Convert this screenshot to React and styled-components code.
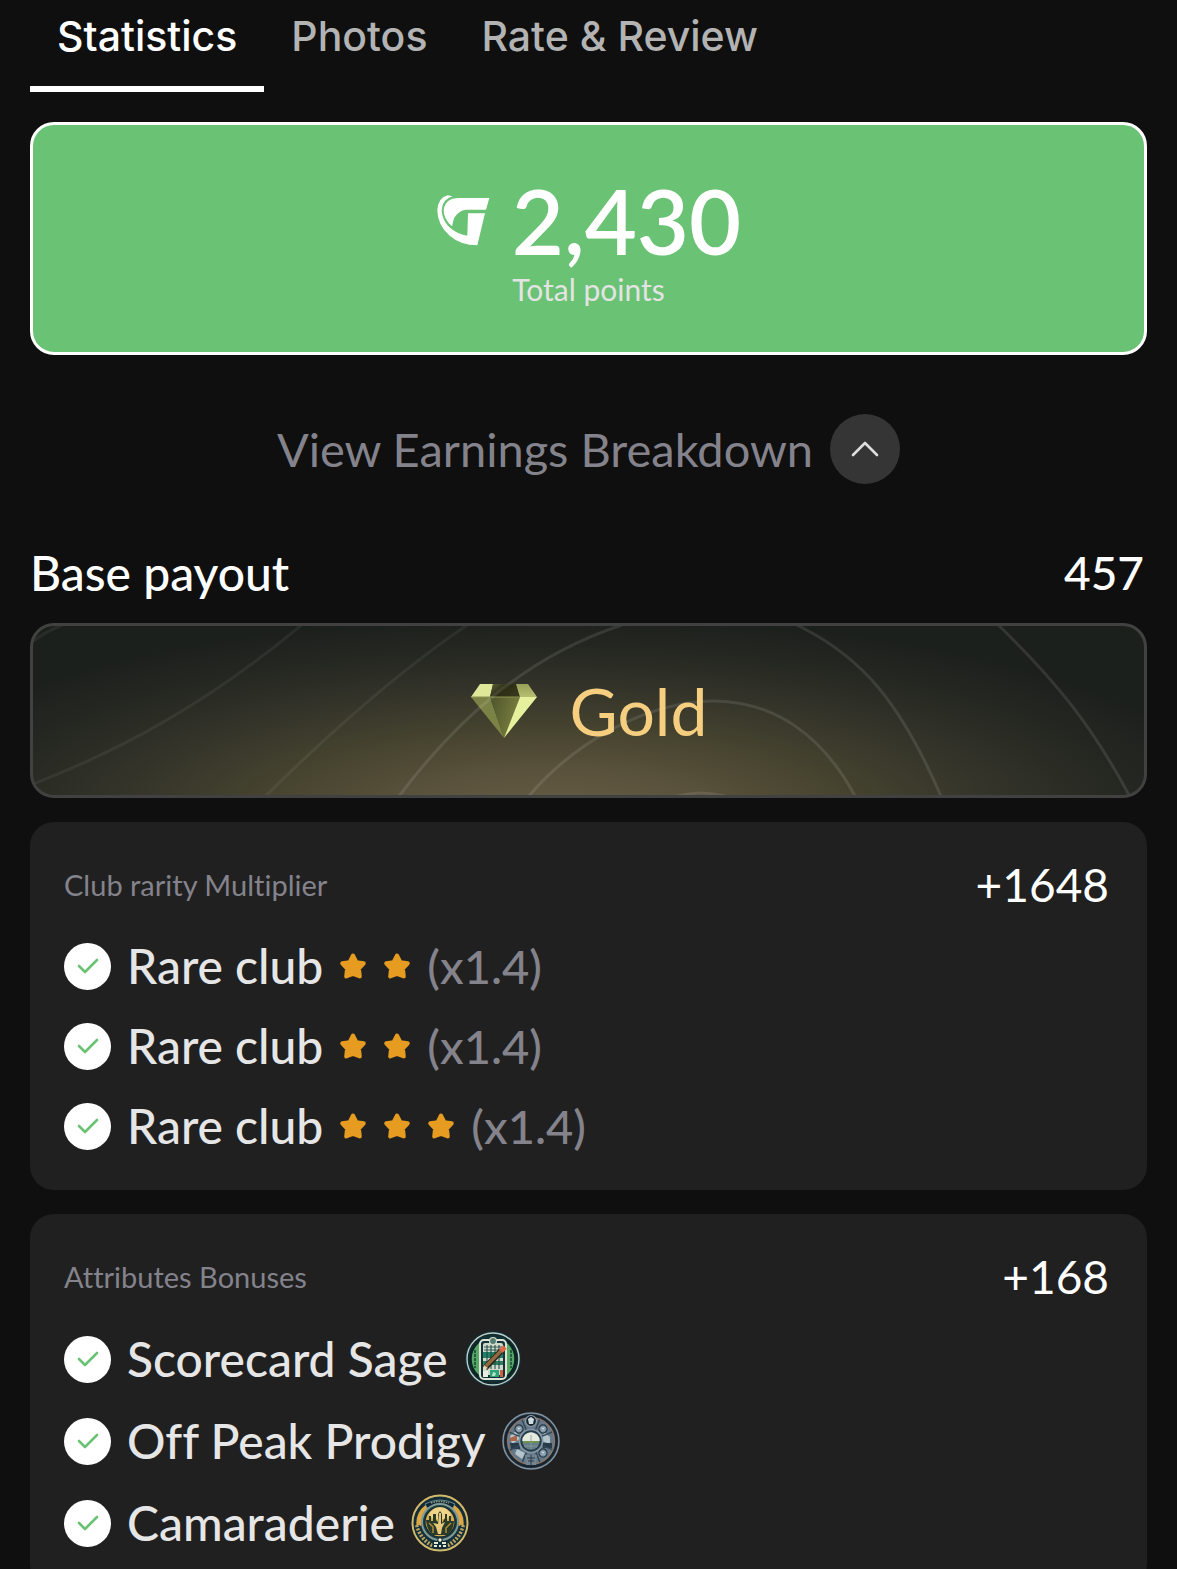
import React, { useState } from "react";
import styled, { createGlobalStyle } from "styled-components";

const GlobalStyle = createGlobalStyle`
  * {
    box-sizing: border-box;
  }

  body {
    margin: 0;
    background-color: #0f0f0f;
  }

  button {
    border: none;
    background: none;
    font: inherit;
    cursor: pointer;
  }
`;

const Page = styled.main`
  height: 100vh;
  overflow-y: auto;
  scrollbar-width: none;
  padding: 0 30px 30px;
  background-color: #0f0f0f;
  color: #ffffff;
  font-family: Lato, sans-serif;
  font-size: 48px;
  font-variant-ligatures: none;
  line-height: 58px;
`;

const TabList = styled.div`
  display: flex;
  height: 92px;
  margin-bottom: 30px;
`;

const Tab = styled.button`
  padding: 0 27px 14px;
  border-bottom: 6px solid ${({ $active }) => ($active ? "#ffffff" : "transparent")};
  color: ${({ $active }) => ($active ? "#ffffff" : "#b3b3b3")};
  font-family: Inter, sans-serif;
  font-size: 41px;
  font-weight: 500;
  white-space: nowrap;
`;

const PointsCard = styled.section`
  display: flex;
  flex-direction: column;
  align-items: center;
  padding: 46px 0 43px;
  border: 3px solid #ffffff;
  border-radius: 24px;
  background-color: #6ac274;
`;

const Points = styled.div`
  display: flex;
  align-items: center;
  gap: 22px;
  font-size: 90px;
  font-weight: 600;
  line-height: 98px;
`;

const PointsLabel = styled.div`
  color: #e4e4e4;
  font-size: 30px;
  line-height: 40px;
`;

const BreakdownToggle = styled.button`
  display: flex;
  align-items: center;
  gap: 17px;
  margin: 59px auto 0;
  padding: 0;
  color: #84838c;
  font-size: 47px;
`;

const ToggleCircle = styled.span`
  display: flex;
  align-items: center;
  justify-content: center;
  width: 70px;
  height: 70px;
  border-radius: 50%;
  background-color: #353535;
`;

const Payout = styled.div`
  display: flex;
  justify-content: space-between;
  margin: 60px 3px 21px 0;
  font-weight: 500;
`;

const Amount = styled.span`
  font-size: 46px;
`;

const TierCard = styled.section`
  position: relative;
  display: flex;
  align-items: center;
  justify-content: center;
  gap: 32px;
  height: 175px;
  overflow: hidden;
  border: 3px solid #414141;
  border-radius: 24px;
  background: radial-gradient(
    ellipse 62% 118% at 47% 112%,
    #665d45 0%,
    #5a523c 22%,
    #47442f 42%,
    #35352a 62%,
    #262822 82%,
    #1c201c 100%
  );
`;

const Rings = styled.svg`
  position: absolute;
  inset: 0;
  width: 100%;
  height: 100%;
  fill: none;
  stroke: #ffffff;
  stroke-width: 3;
`;

const TierName = styled.span`
  position: relative;
  color: #f5ce80;
  font-size: 66px;
  line-height: 76px;
`;

const BonusCard = styled.section`
  margin-top: 24px;
  padding: 34px 38px 24px 34px;
  border-radius: 24px;
  background-color: #202020;
`;

const BonusHeader = styled.header`
  display: flex;
  align-items: center;
  justify-content: space-between;
  margin-bottom: 12px;
`;

const BonusTitle = styled.h2`
  margin: 0;
  color: #84838c;
  font-size: 29px;
  font-weight: 400;
`;

const BonusList = styled.ul`
  margin: 0;
  padding: 0;
  list-style: none;
`;

const BonusItem = styled.li`
  display: flex;
  align-items: center;
  gap: 16px;
  height: ${({ $tall }) => ($tall ? 82 : 80)}px;
  color: #e6e6e6;
  font-weight: 500;
`;

const CheckCircle = styled.span`
  display: flex;
  align-items: center;
  justify-content: center;
  width: 47px;
  height: 47px;
  border-radius: 50%;
  background-color: #ffffff;
`;

const Stars = styled.span`
  display: flex;
  gap: 16px;
`;

const Multiplier = styled.span`
  color: #84838c;
  font-size: 47px;
`;

const tabs = ["Statistics", "Photos", "Rate & Review"];
const clubs = [
  { id: 1, stars: 2 },
  { id: 2, stars: 2 },
  { id: 3, stars: 3 },
];

function Logo() {
  return (
    <svg width="54" height="54" viewBox="56 76 162 162" fill="#ffffff">
      <path d="M216 91 L206 126 L146 126 Q124 128 110 152 L104 176 Q78 153 79 126 Q84 92 124 91 Z" />
      <path d="M152 137 L203 137 L180 233 Q131 233 97 204 Q60 172 60 128 Q62 90 91 83 L106 86 Q73 95 73 129 Q75 160 100 182 Q124 202 150 204 Z" />
    </svg>
  );
}

function Diamond() {
  return (
    <svg width="68" height="56" viewBox="0 0 68 56">
      <defs>
        <linearGradient id="tableTop" x1="0" y1="0" x2="1" y2="0.5">
          <stop offset="0" stopColor="#5e6338" />
          <stop offset="0.5" stopColor="#2b2c14" />
          <stop offset="1" stopColor="#35381b" />
        </linearGradient>
        <linearGradient id="facetMid" x1="0" y1="0" x2="1" y2="0.4">
          <stop offset="0" stopColor="#4e532b" />
          <stop offset="1" stopColor="#79803f" />
        </linearGradient>
        <linearGradient id="facetRight" x1="0" y1="0" x2="0" y2="1">
          <stop offset="0" stopColor="#989e58" />
          <stop offset="1" stopColor="#b7bf71" />
        </linearGradient>
      </defs>
      <path d="M10 1 L23 1 L20 14 L1 14 Z" fill="#dfe799" />
      <path d="M23 1 L46 1 L50 14 L20 14 Z" fill="url(#tableTop)" />
      <path d="M46 1 L58 1 L67 14 L50 14 Z" fill="url(#facetRight)" />
      <path d="M1 14 L20 14 L34 55 Z" fill="#7b8246" />
      <path d="M20 14 L50 14 L34 55 Z" fill="url(#facetMid)" />
      <path d="M50 14 L67 14 L34 55 Z" fill="#e6f19d" />
      <path d="M1 14 H50" stroke="#8b9251" strokeWidth="1" />
    </svg>
  );
}

function TierRings() {
  return (
    <Rings viewBox="32 626 1113 169" preserveAspectRatio="none" aria-hidden="true">
      <g strokeOpacity="0.06">
        <path d="M32 641 Q46 631 61 625" />
        <path d="M32 784 C120 750 206 704 301 625" />
        <path d="M264 797 C330 732 400 670 467 625" />
      </g>
      <g strokeOpacity="0.1">
        <path d="M398 797 C460 715 530 655 622 625" />
        <path d="M528 797 C576 740 650 701 715 701 C775 702 823 735 856 797" />
        <path d="M797 625 C864 657 902 705 942 797" />
        <path d="M999 625 C1056 680 1094 727 1131 797" />
        <path d="M674 797 Q701 789 728 797" />
      </g>
    </Rings>
  );
}

function Check() {
  return (
    <CheckCircle>
      <svg width="24" height="18" viewBox="0 0 24 18" fill="none" stroke="#6ac274" strokeWidth="2.6" strokeLinecap="round" strokeLinejoin="round">
        <path d="M3 9 L9 15 L21 3" />
      </svg>
    </CheckCircle>
  );
}

function Star() {
  return (
    <svg width="28" height="30" viewBox="0 0 28 30">
      <path
        d="M14 4.5 L17.4 11.2 L24.8 12.3 L19.9 17.6 L20.8 25.5 L14 22.8 L7.2 25.5 L8.1 17.6 L3.2 12.3 L10.6 11.2 Z"
        fill="#e59c20"
        stroke="#e59c20"
        strokeWidth="4"
        strokeLinejoin="round"
      />
    </svg>
  );
}

function ScorecardBadge() {
  return (
    <svg width="58" height="58" viewBox="0 0 58 58">
      <circle cx="29" cy="29" r="28" fill="#142c35" />
      <circle cx="29" cy="29" r="26" fill="#152a2d" stroke="#b9d0c8" strokeWidth="1.4" />
      <circle cx="29" cy="29" r="22.5" fill="#57a766" stroke="#0b2527" strokeWidth="2.5" />
      <path d="M11 20 V38 M47 20 V38" stroke="#225c3c" strokeWidth="2" strokeDasharray="3 1" />
      <path d="M16 8 Q29 2 42 8 V12 H16 Z M16 47 Q29 58 42 47 Z" fill="#143234" />
      <rect x="16" y="10" width="26" height="39" rx="4" fill="#163337" stroke="#dfe5d9" strokeWidth="2" />
      <rect x="19" y="13" width="20" height="32" rx="2" fill="#d0d9cc" />
      <path d="M20 17 H38 M20 20 H38" stroke="#405f57" strokeWidth="1" />
      <rect x="19" y="22" width="20" height="6" fill="#258166" />
      <rect x="19" y="31" width="20" height="4" fill="#317e62" />
      <path d="M23 15 V39 M27 15 V39 M31 15 V39 M35 15 V39" stroke="#13463e" strokeWidth="1" />
      <rect x="19" y="41" width="5" height="6" fill="#ecede2" />
      <rect x="26" y="40" width="9" height="7" fill="#30a479" />
      <rect x="36" y="40" width="3" height="7" fill="#ca6044" />
      <path d="M29 42 L32 43 L31 46 H28 Z" fill="#b8e5c4" />
      <circle cx="29" cy="11" r="3.5" fill="#557e70" stroke="#d4ddd2" strokeWidth="1.2" />
      <path d="M21 38 L37 21" stroke="#2b241b" strokeWidth="6" />
      <path d="M22 36 L38 20" stroke="#8f6a42" strokeWidth="3.5" />
      <path d="M37 21 L41 17" stroke="#e0694a" strokeWidth="5" />
      <path d="M20 40 L20 35 L24 38 Z" fill="#ead4ab" />
    </svg>
  );
}

function PeakBadge() {
  const spokes = [0, 45, 90, 135, 180, 225, 270, 315];
  return (
    <svg width="58" height="58" viewBox="0 0 58 58">
      <circle cx="29" cy="29" r="28" fill="#293844" stroke="#8293a1" strokeWidth="1.5" />
      <circle cx="29" cy="29" r="25.5" fill="none" stroke="#17232d" strokeWidth="2" />
      <circle cx="29" cy="29" r="23.5" fill="#65798a" stroke="#9c7960" strokeWidth="1.1" />
      <path d="M8 24 L14 19 L18 27 L10 32 Z M42 20 L48 25 L48 32 L40 29 Z M15 37 L23 41 L20 47 L13 42 Z" fill="#b3c4cd" />
      <path d="M8 31 H18 V37 H9 Z M40 31 H50 V36 H41 Z" fill="#273b49" />
      <path d="M8 26 L15 23 V29 H8 Z" fill="#a9684a" />
      {spokes.map((angle) => (
        <path key={angle} d="M29 6 V18" stroke="#344857" strokeWidth="1.4" transform={`rotate(${angle + 22} 29 29)`} />
      ))}
      {[45, 135, 315].map((angle) => (
        <g key={angle} transform={`rotate(${angle} 29 29)`}>
          <circle cx="29" cy="12" r="4" fill="#8297a6" stroke="#253643" strokeWidth="1.3" />
          <path d="M27 12 H31 M29 10 V14" stroke="#ccd9df" />
        </g>
      ))}
      <circle cx="29" cy="9" r="5.5" fill="#182935" stroke="#91a1ab" strokeWidth="1.2" />
      <path d="M26 7 L29 5 L32 7 L31 12 H27 Z" fill="#d0dce0" />
      <circle cx="29" cy="29" r="11.5" fill="#263d4b" stroke="#8497a5" strokeWidth="1.7" />
      <circle cx="29" cy="29" r="8.7" fill="#657d86" />
      <path d="M20.3 29 A8.7 8.7 0 0 1 37.7 29 Z" fill="#e5ebdf" />
      <path d="M21 30 H37" stroke="#6d9250" strokeWidth="2" />
      <path d="M29 23 V37 M22 34 H36" stroke="#899da1" strokeWidth="0.8" />
      <path d="M23 43 H35 L34 53 H24 Z" fill="#738592" />
      <path d="M25 46 H33 M26 49 H32 M29 43 V53" stroke="#273b49" />
    </svg>
  );
}

function CamaraderieBadge() {
  return (
    <svg width="58" height="58" viewBox="0 0 58 58">
      <circle cx="29" cy="29" r="27.5" fill="#17323b" stroke="#d0b96b" strokeWidth="2" />
      <circle cx="29" cy="29" r="24.5" fill="none" stroke="#132c38" strokeWidth="3" />
      <path d="M8 32 A21 21 0 0 1 16 13 M42 13 A21 21 0 0 1 50 32" fill="none" stroke="#dda743" strokeWidth="5" />
      <path d="M14 10 Q29 2 44 10 L41 15 Q29 9 17 15 Z" fill="#102632" stroke="#668989" strokeWidth="1" />
      <path d="M20 9 Q29 6 38 9" fill="none" stroke="#8d9c8e" strokeWidth="1.5" strokeDasharray="1.5 1" />
      <circle cx="29" cy="28" r="18" fill="#203e43" stroke="#819c96" strokeWidth="2" />
      <circle cx="29" cy="28" r="15" fill="#d4ae52" stroke="#142b31" strokeWidth="1.3" />
      <path d="M18 21 Q21 13 29 13 Q37 13 40 21 L36 25 H22 Z" fill="#efd387" />
      <path d="M15 26 H18 V22 H20 V27 H22 V20 H25 V26 L27 28 V20 L29 17 L31 20 V29 L34 24 V20 H36 V27 H38 V22 H40 V27 H43 Q42 38 36 41 H22 Q16 37 15 26 Z" fill="#293a2a" />
      <path d="M28 19 H30 V30 L34 28 L31 34 L30 40 H27 L25 33 L22 29 L27 30 Z" fill="#e7c77a" />
      <path d="M18 29 L22 33 V39 M40 29 L35 34 V39" stroke="#b18c38" strokeWidth="1.5" fill="none" />
      <path d="M6 31 Q9 45 22 52 M52 31 Q49 45 36 52" fill="none" stroke="#bba35b" strokeWidth="4" strokeDasharray="2 1.5" />
      <path d="M8 31 Q11 43 23 49 M50 31 Q47 43 35 49" fill="none" stroke="#18313a" strokeWidth="1.2" />
      <path d="M27 44 H31 L32 47 H36 L37 53 H21 L22 47 H26 Z" fill="#102d3b" />
      <circle cx="29" cy="46" r="1.7" fill="#eff2da" />
      <path d="M23 49 H27 M31 49 H35 M23 52 H26 M28 52 H30 M32 52 H35" stroke="#e8ead0" strokeWidth="1.8" />
    </svg>
  );
}

const attributes = [
  { name: "Scorecard Sage", Badge: ScorecardBadge },
  { name: "Off Peak Prodigy", Badge: PeakBadge },
  { name: "Camaraderie", Badge: CamaraderieBadge },
];

function App() {
  const [activeTab, setActiveTab] = useState("Statistics");
  const [open, setOpen] = useState(true);

  return (
    <Page>
      <GlobalStyle />
      <TabList role="tablist">
        {tabs.map((tab) => (
          <Tab
            key={tab}
            role="tab"
            aria-selected={tab === activeTab}
            $active={tab === activeTab}
            onClick={() => setActiveTab(tab)}
          >
            {tab}
          </Tab>
        ))}
      </TabList>

      <PointsCard>
        <Points>
          <Logo />
          <span>2,430</span>
        </Points>
        <PointsLabel>Total points</PointsLabel>
      </PointsCard>

      <BreakdownToggle aria-expanded={open} onClick={() => setOpen(!open)}>
        View Earnings Breakdown
        <ToggleCircle>
          <svg width="28" height="18" viewBox="0 0 28 18" fill="none" stroke="#dedede" strokeWidth="2.6" strokeLinecap="round" strokeLinejoin="round">
            <path d={open ? "M2 15 L14 3 L26 15" : "M2 3 L14 15 L26 3"} />
          </svg>
        </ToggleCircle>
      </BreakdownToggle>

      {open && (
        <>
          <Payout>
            <span>Base payout</span>
            <Amount>457</Amount>
          </Payout>

          <TierCard>
            <TierRings />
            <Diamond />
            <TierName>Gold</TierName>
          </TierCard>

          <BonusCard>
            <BonusHeader>
              <BonusTitle>Club rarity Multiplier</BonusTitle>
              <Amount>+1648</Amount>
            </BonusHeader>
            <BonusList>
              {clubs.map(({ id, stars }) => (
                <BonusItem key={id}>
                  <Check />
                  <span>Rare club</span>
                  <Stars>
                    {Array.from({ length: stars }, (_, i) => (
                      <Star key={i} />
                    ))}
                  </Stars>
                  <Multiplier>(x1.4)</Multiplier>
                </BonusItem>
              ))}
            </BonusList>
          </BonusCard>

          <BonusCard>
            <BonusHeader>
              <BonusTitle>Attributes Bonuses</BonusTitle>
              <Amount>+168</Amount>
            </BonusHeader>
            <BonusList>
              {attributes.map(({ name, Badge }) => (
                <BonusItem key={name} $tall>
                  <Check />
                  <span>{name}</span>
                  <Badge />
                </BonusItem>
              ))}
            </BonusList>
          </BonusCard>
        </>
      )}
    </Page>
  );
}

export default App;
